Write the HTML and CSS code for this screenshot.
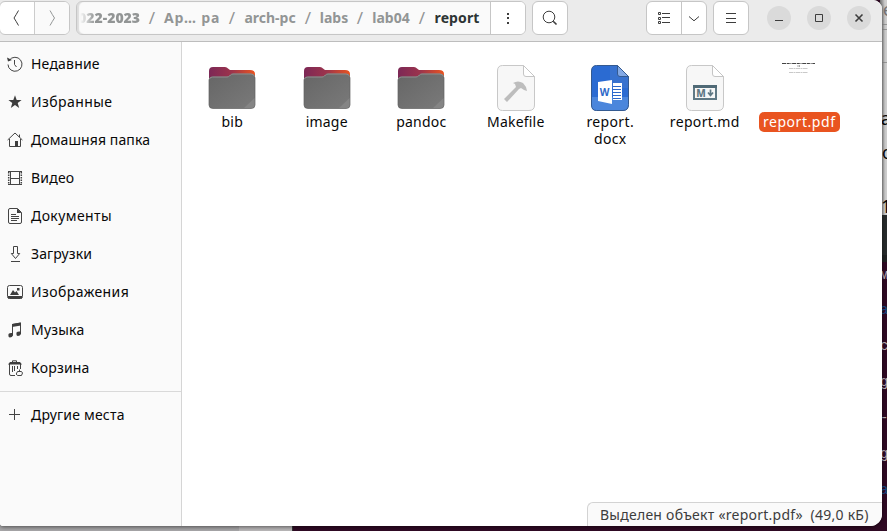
FILE: index.html
```html
<!DOCTYPE html>
<html lang="ru">
<head>
<meta charset="utf-8">
<title>report</title>
<link rel="stylesheet" href="styles.css">
</head>
<body>
<div class="desktop">
  <div class="behind-bottom"><i class="panel"></i><i class="panel-light"></i></div>
  <div class="behind-right">
    <div class="page-edge"><i class="rule r1"></i><i class="rule r2"></i><i class="rule r3"></i><span class="peek p0">е</span><span class="peek p1">а</span><span class="peek p2">о</span><span class="peek p3">1</span></div>
    <div class="bar-edge"></div>
    <div class="term-edge"><span class="t t1">м</span><span class="t t2">a</span><span class="t t3">с</span><span class="t t4">g</span><span class="t t5">-</span><span class="t t6">g</span><span class="t t7">a</span></div>
  </div>
</div>
<div class="window">
  <header class="header">
    <div class="group nav">
      <button class="btn back"><svg width="16" height="16" viewBox="0 0 16 16"><path d="M9.5 .5Q7 5 5 8Q7 11 9.5 15.500"/></svg></button>
      <button class="btn forward"><svg width="16" height="16" viewBox="0 0 16 16"><path d="M6 .5Q8.500 5 10.500 8Q8.500 11 6 15.500"/></svg></button>
    </div>
    <div class="group path">
      <div class="crumbs">
        <span class="crumb c1"><b>2022-2023</b></span><span class="sep">/</span>
        <span class="crumb c2">Ар… ра</span><span class="sep">/</span>
        <span class="crumb c3">arch-pc</span><span class="sep">/</span>
        <span class="crumb c4">labs</span><span class="sep">/</span>
        <span class="crumb c5">lab04</span><span class="sep">/</span>
        <span class="crumb c6">report</span>
      </div>
      <button class="btn more"><svg width="16" height="16" viewBox="0 0 16 16"><path class="solid" d="M7 3h2v2H7zM7 7h2v2H7zM7 12h2v2H7z"/></svg></button>
    </div>
    <button class="group btn search"><svg width="16" height="16" viewBox="0 0 16 16"><circle cx="7" cy="7" r="5.800"/><path class="thick" d="M11.200 11.200L14.500 14.500"/></svg></button>
    <div class="group view">
      <button class="btn list"><svg width="16" height="16" viewBox="0 0 16 16"><path d="M2.500 2.500h2v2h-2zM2.500 7.500h2v2h-2zM2.500 11.500h2v2h-2zM6 3.500h8M6 7.500h8M6 12.500h8"/></svg></button>
      <button class="btn drop"><svg width="16" height="16" viewBox="0 0 16 16"><path d="M3 6.500L8 10.800L13 6.500"/></svg></button>
    </div>
    <button class="group btn menu"><svg width="16" height="16" viewBox="0 0 16 16"><path d="M3 3.500h10M3 8.500h10M3 12.500h10"/></svg></button>
    <div class="controls">
      <button class="ctl"><svg width="16" height="16" viewBox="0 0 16 16"><path d="M4 10.500h8"/></svg></button>
      <button class="ctl"><svg width="16" height="16" viewBox="0 0 16 16"><path d="M4.500 4.500h7v7h-7z"/></svg></button>
      <button class="ctl"><svg width="16" height="16" viewBox="0 0 16 16"><path class="cross" d="M4.500 4.500l7 7M11.500 4.500l-7 7"/></svg></button>
    </div>
  </header>
  <div class="body">
    <nav class="sidebar">
      <a class="place"><svg width="16" height="16" viewBox="0 0 16 16"><path d="M2.300 4.200A7 7 0 1 1 1 8.500M7.500 4v4.500l2 2.500"/><path class="solid" d="M0 1.500L1 5.500L5 4z"/></svg><span>Недавние</span></a>
      <a class="place"><svg width="16" height="16" viewBox="0 0 16 16"><path class="solid" d="M8 1.300l1.700 4.700h4.900l-3.900 3 1.500 5L8 11.100 3.800 14l1.500-5-3.900-3h4.900z"/></svg><span class="wide">Избранные</span></a>
      <a class="place"><svg width="16" height="16" viewBox="0 0 16 16"><path d="M.6 8L8 1l7.400 7M2.500 7v7.500h11V7M12.500 5V2.500"/><path class="solid" d="M8 9h3v6H8z"/></svg><span class="tight">Домашняя папка</span></a>
      <a class="place"><svg width="16" height="16" viewBox="0 0 16 16"><path d="M3.500 1.500h9v13h-9zM3.500 8.500h9M1 1.500h14M1 14.500h14"/><path class="film" d="M1.700 2v12M14.300 2v12"/></svg><span>Видео</span></a>
      <a class="place"><svg width="16" height="16" viewBox="0 0 16 16"><path d="M3 .5h7.500l4 4V14q0 1.500-1.500 1.500H3Q1.500 15.500 1.500 14V2Q1.500.5 3 .5zM4 6.500h5M4 8.500h8M4 10.500h8M4 12.500h6"/><path class="solid" d="M10 .5V5h4.500z"/></svg><span class="wide">Документы</span></a>
      <a class="place"><svg width="16" height="16" viewBox="0 0 16 16"><path d="M6.500.5h4v7h2.200l-4.200 5-4.200-5h2.200zM4 15.500h9"/></svg><span class="tight">Загрузки</span></a>
      <a class="place"><svg width="16" height="16" viewBox="0 0 16 16"><rect x=".5" y="1.500" width="15" height="13" rx="2"/><path class="solid" d="M1 12h14v2.500H1zM3 11l3-5 2 2.500L9.500 7l2.500 4zM10 4h2.500v2.500H10z"/></svg><span class="wide">Изображения</span></a>
      <a class="place"><svg width="16" height="16" viewBox="0 0 16 16"><path d="M5.500 13V2.500l8-1.500v10"/><path class="solid" d="M5 2l9-1.500v3L5 5zM1.500 12q1-1.500 4.500-1v2.500q-1 2-3 2t-1.500-3.500zM9.500 10.500q1-1.500 4.500-1V12q-1 2-3 2t-1.500-3.500z"/></svg><span>Музыка</span></a>
      <a class="place"><svg width="16" height="16" viewBox="0 0 16 16"><path d="M5.500 2V.8h4V2M2.500 4v10q0 1.500 1.500 1.500h4M13.500 4v5M5.500 6v6M7.500 6v5M10.500 6v3"/><path class="solid" d="M1 4.500L3 2h10l2 2.500z"/><path d="M12.500 9.500v2M10.500 11.500h4l1 1.500-1 2.500h-4L9.200 14z"/></svg><span>Корзина</span></a>
      <hr>
      <a class="place"><svg width="16" height="16" viewBox="0 0 16 16"><path d="M2 7.500h11M7.500 2v11"/></svg><span>Другие места</span></a>
    </nav>
    <main class="files">
      <svg class="defs" width="0" height="0"><defs>
        <linearGradient id="tab"><stop offset="0" stop-color="#7c2856"/><stop offset=".5" stop-color="#9d344c"/><stop offset="1" stop-color="#e95420"/></linearGradient>
        <linearGradient id="front" x1="0" y1="0" x2="1" y2="1"><stop offset="0" stop-color="#666"/><stop offset="1" stop-color="#7a7a7a"/></linearGradient>
        <g id="folder"><path fill="url(#tab)" d="M1 15V7q0-4 4-4h12q2 0 3 1.500L22 6h20q5 0 5 4v8z"/><path fill="url(#front)" stroke="#626262" stroke-width=".7" d="M1 16q0-3 3-3h15q1.500 0 2.500-1l1-1q1-1 2.500-1h18q4 0 4 4v27q0 3.500-4 3.500H5q-4 0-4-3.500z"/><path fill="none" stroke="#929292" d="M1.500 15q.5-2 3-2H19q1.500 0 2.500-1l1-1q1-1 2.500-1h18q3 0 3.500 2.500"/><path fill="#858585" d="M36 44L46.500 34v7q0 3-3.500 3z"/></g>
        <g id="sheet"><path d="M10.500 1.500H31L42.500 12.500V41q0 5.500-5.500 5.500H10.500Q5.500 46.500 5.500 41V7q0-5.500 5-5.500z" fill="#f7f7f7" stroke="#c8c8c8"/><path d="M31.500 1.500V10q0 2.500 2.500 2.500h8.500z" fill="#fff" stroke="#c5c5c5"/></g>
      </defs></svg>
      <div class="file"><svg width="48" height="48"><use href="#folder"/></svg><span>bib</span></div>
      <div class="file"><svg width="48" height="48"><use href="#folder"/></svg><span>image</span></div>
      <div class="file"><svg width="48" height="48"><use href="#folder"/></svg><span>pandoc</span></div>
      <div class="file"><svg width="48" height="48"><use href="#sheet"/><path fill="#bdbdbd" d="M21 19q5-3 10 0l3 4 1 4-3-1-3-2-2 1-12 13-3-3 12-12-1-3z"/></svg><span>Makefile</span></div>
      <div class="file"><svg width="48" height="48"><path d="M10.500 1.500h21L42.500 12.500v28q0 6-5.500 6H10.500q-5 0-5-5.500V7q0-5.500 5-5.500z" fill="#2b6bd2"/><path d="M24 1.500h7.500L42.500 12.500V24H24z" fill="#3872cf"/><path d="M24 33h18.500v8q0 5.500-5.500 5.500H24zM5.500 33H24v13.500H10.500q-5 0-5-5.500z" fill="#4b86dc"/><path d="M10.500 1.500h21L42.500 12.500v28q0 6-5.500 6H10.500q-5 0-5-5.500V7q0-5.500 5-5.500z" fill="none" stroke="#345a91"/><path d="M31.500 1.500V10q0 2.500 2.500 2.500h8.500z" fill="#83a9e5" stroke="#345a91"/><path d="M12 18l14-2v24l-14-3zM27 19h9v17h-9z" fill="#fff"/><path d="M27 22.500h8M27 25.500h8M27 28.500h8M27 31.500h8M27 34.500h8" stroke="#2d67c8"/><text x="18.500" y="31.500" class="word">W</text></svg><span class="wide">report.<br>docx</span></div>
      <div class="file"><svg width="48" height="48"><use href="#sheet"/><rect x="13" y="22" width="22" height="13" fill="none" stroke="#607985" stroke-width="2"/><path d="M12 21h24v3H12z" fill="#506a76"/><text x="20" y="32.500" class="md">M</text><path d="M29.500 25.500v5M27 28.500l2.500 3 2.500-3" fill="none" stroke="#607985" stroke-width="1.700"/></svg><span class="wide">report.md</span></div>
      <div class="file selected"><svg width="48" height="64" class="thumb"><path d="M7 15.500h33" stroke="#444" stroke-width="1.200" stroke-dasharray="4 .7 3 .7 1 .7"/><path d="M22.500 18h3" stroke="#555" stroke-dasharray="1 .5"/><path d="M14 20.500h19M14 24.500h19" stroke="#bbb" stroke-width=".8" stroke-dasharray="4 .5 2 .5"/></svg><span>report.pdf</span></div>
    </main>
    <div class="status"><span>Выделен объект «report.pdf»&nbsp; (49,0 кБ)</span></div>
  </div>
</div>
</body>
</html>
```

FILE: styles.css
```css
* { box-sizing: border-box; }
html, body { margin: 0; height: 100%; overflow: hidden; }
body { font: 14px/17px "Noto Sans", "Open Sans", sans-serif; color: #080808; position: relative; }
button { font: inherit; padding: 0; margin: 0; border: 0; background: none; color: inherit; }
svg { display: block; flex: none; fill: none; stroke: #3d3d3d; }
svg .solid { fill: #3d3d3d; stroke: none; }
svg .thick, svg .cross { stroke-width: 1.6; }
svg .film { stroke-dasharray: 1.5 1; stroke-width: 1.5; }
.desktop { position: absolute; inset: 0; background: #300a24; }
.behind-bottom { position: absolute; left: 0; bottom: 0; height: 20px; width: 293px; display: flex; border-right: 1px solid #333; }
.panel { width: 239px; background: #a8a7a9; }
.panel-light { flex: 1; background: #bbb9ba; }
.behind-right { position: absolute; right: 0; top: 0; width: 7px; height: 531px; display: flex; flex-direction: column; overflow: hidden; }
.page-edge { height: 215px; background: linear-gradient(90deg, #777, #cfcfcf 70%); position: relative; }
.bar-edge { height: 47px; background: #282c2d; border-bottom: 7px solid #202223; }
.term-edge { flex: 1; background: #300a24; position: relative; }
.rule { position: absolute; left: 0; width: 7px; height: 1px; background: #999; }
.r1 { top: 24px; } .r2 { top: 29px; } .r3 { top: 62px; }
.peek, .t { position: absolute; left: 1px; }
.peek { font-size: 18px; }
.p0 { top: 1px; left: 3px; color: #777; } .p1 { top: 110px; } .p2 { top: 144px; left: 2px; } .p3 { top: 198px; }
.t { color: #bdb3ba; font: 14px/16px "Liberation Mono", monospace; left: 0; }
.t1 { top: 5px; } .t2 { top: 40px; color: #164e88; } .t3 { top: 76px; } .t4 { top: 112px; } .t5 { top: 148px; } .t6 { top: 184px; } .t7 { top: 220px; color: #164e88; }
.window { position: relative; width: 882px; height: 526px; background: #fff; border-radius: 0 9px 12px 3px; overflow: hidden; box-shadow: 0 1px 4px rgba(0,0,0,.55); }
.header { height: 42px; background: #ebebeb; border-bottom: 1px solid #bdbdbd; display: flex; align-items: flex-start; padding-top: 1px; }
.group { height: 34px; border: 1px solid #c6c6c6; border-radius: 6px; background: #fff; display: flex; overflow: hidden; flex: none; }
.btn { display: flex; align-items: center; justify-content: center; }
.nav { width: 71px; margin-left: -1px; margin-right: 6px; }
.back { width: 35px; border-right: 1px solid #ccc; }
.forward { flex: 1; background: #fafafa; }
.forward svg { stroke: #929595; }
.path { width: 450px; background: #fafafa; box-shadow: inset 2px 0 1px #ddd; margin-right: 6px; }
.crumbs { width: 413px; display: flex; align-items: center; justify-content: flex-end; padding: 0 10px 2px 0; font-weight: 700; color: #929595; overflow: hidden; white-space: nowrap; }
.sep { width: 24px; text-align: center; font-weight: 400; font-size: 17px; flex: none; }
.crumb { flex: none; display: flex; justify-content: center; }
.c1 { width: 60px; justify-content: flex-end; overflow: hidden; -webkit-mask-image: linear-gradient(90deg, transparent, #000 15px); mask-image: linear-gradient(90deg, transparent, #000 15px); }
.c2 { width: 56px; letter-spacing: .8px; }
.c3 { width: 52px; } .c4 { width: 28px; } .c5 { width: 38px; } .c6 { width: 46px; color: #2d3434; letter-spacing: .1px; }
.more { flex: 1; border-left: 1px solid #c6c6c6; background: #fff; }
.search { width: 36px; }
.view { width: 61px; margin-left: 78px; margin-right: 6px; }
.list { width: 35px; border-right: 1px solid #c6c6c6; }
.drop { flex: 1; }
.menu { width: 36px; }
.controls { display: flex; gap: 16px; margin: 5px 0 0 18px; }
.ctl { width: 24px; height: 24px; border-radius: 50%; background: #dadada; display: flex; align-items: center; justify-content: center; }
.body { height: 484px; display: flex; position: relative; }
.sidebar { width: 182px; background: #fafafa; border-right: 1px solid #d5d5d5; padding-top: 3px; flex: none; }
.place { height: 38px; display: flex; align-items: center; gap: 8px; padding-left: 7px; white-space: nowrap; }
.place svg { stroke: #444; }
.place span { padding-bottom: 2px; letter-spacing: .2px; }
.place .wide { letter-spacing: .42px; }
.place .tight { letter-spacing: .1px; }
.sidebar hr { height: 1px; border: 0; background: #d9d9d9; margin: 4px 0; }
.files { flex: 1; display: grid; grid-template-columns: repeat(7, 94.5px); align-content: start; padding: 22px 0 0 3px; }
.defs { position: absolute; }
.file { display: flex; flex-direction: column; align-items: center; text-align: center; white-space: nowrap; }
.file svg { stroke: none; }
.file > span { padding: 1px 4px 2px; border-radius: 5px; letter-spacing: .2px; }
.file > .wide { letter-spacing: .35px; }
.file.selected > span { background: #e95420; color: #fff; letter-spacing: .55px; }
.file .thumb { margin-top: -16px; }
.word { font: 700 10px "Noto Sans", sans-serif; fill: #2d67c8; text-anchor: middle; }
.md { font: 800 10px "Noto Sans", sans-serif; fill: #607985; text-anchor: middle; }
.status { position: absolute; right: 0; bottom: 0; width: 295px; height: 24px; background: #fafafa; border: 1px solid #d3d3d3; border-width: 1px 0 0 1px; border-radius: 6px 0 0; display: flex; align-items: center; padding-left: 12px; color: #3d3d3d; white-space: nowrap; letter-spacing: .25px; }
```
